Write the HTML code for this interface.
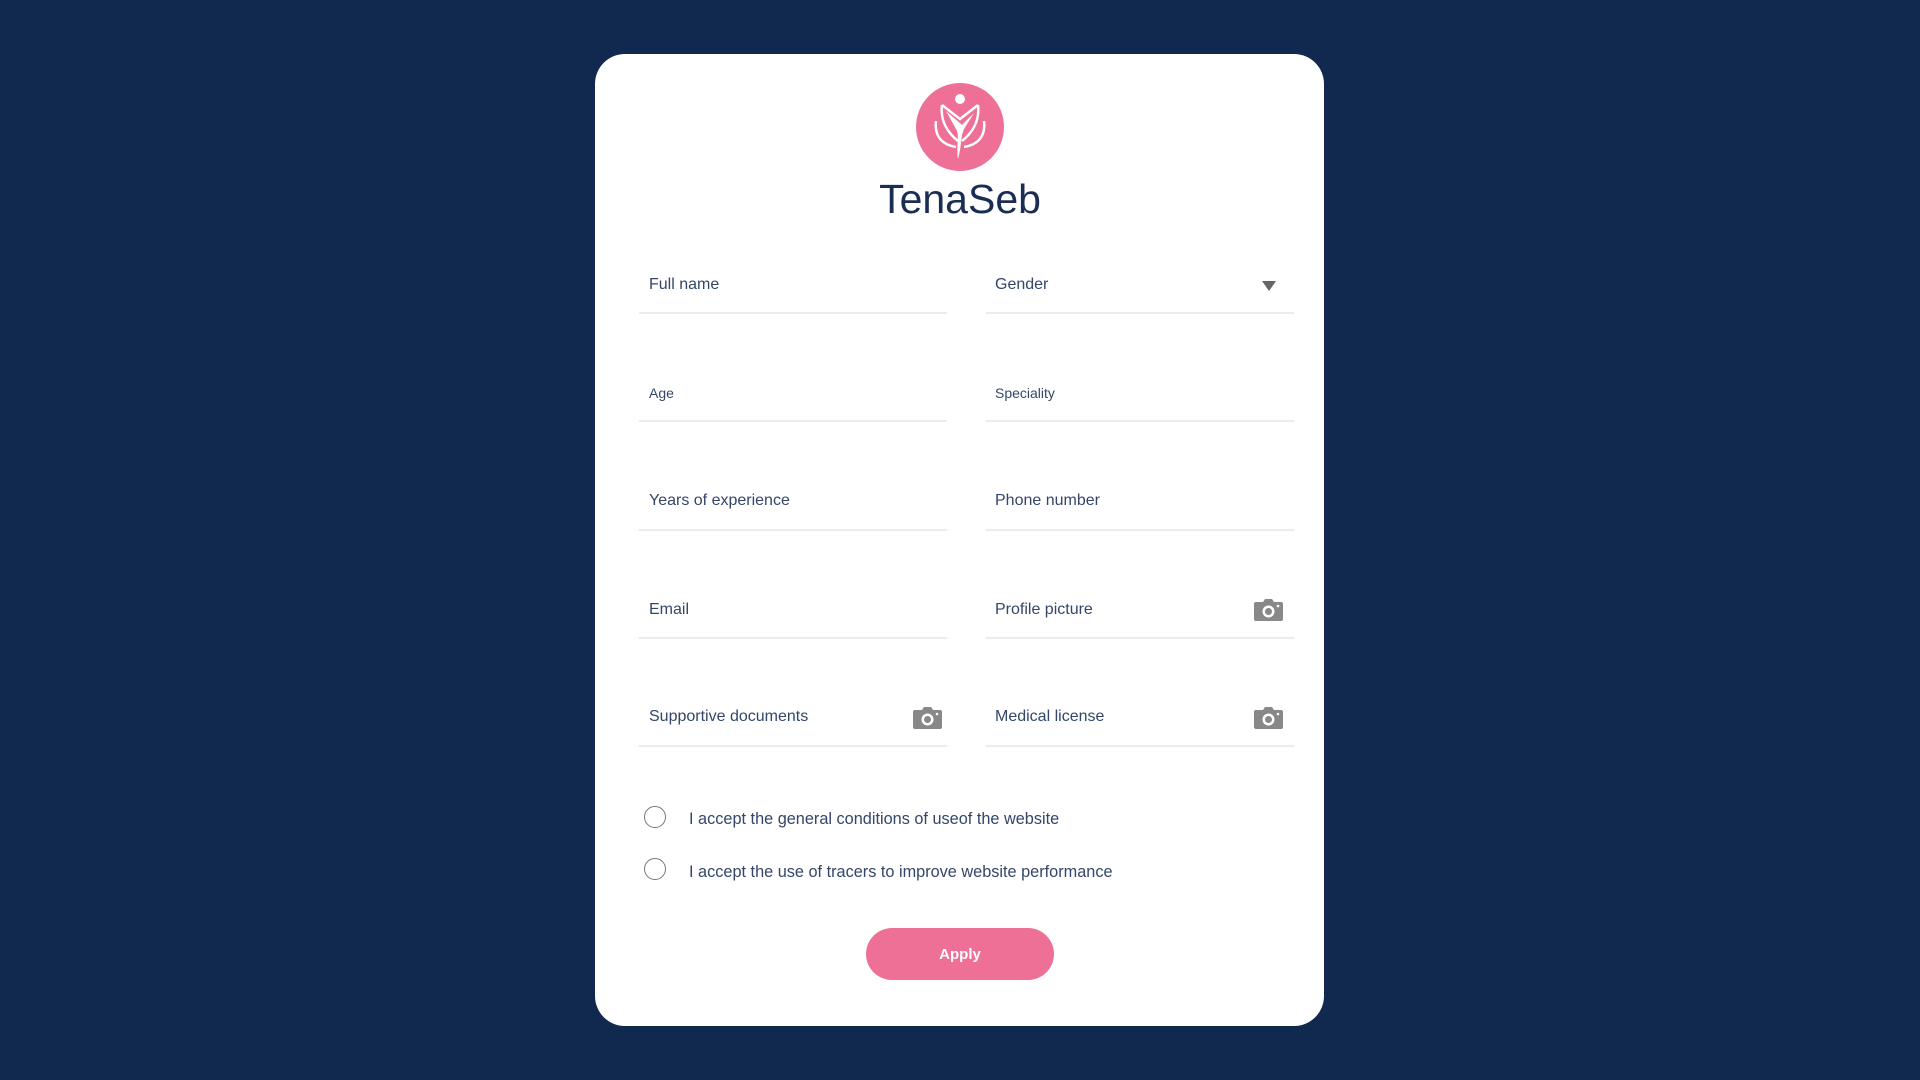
<!DOCTYPE html>
<html><head><meta charset="utf-8"><style>
*{margin:0;padding:0;box-sizing:border-box}
body{width:1920px;height:1080px;background:#11294f;font-family:"Liberation Sans",sans-serif;position:relative;overflow:hidden}
.card{position:absolute;left:595px;top:54px;width:729px;height:972px;background:#fff;border-radius:30px}
.abs{position:absolute}
.lbl{position:absolute;font-size:16px;color:#34466a;margin-top:2px}
.line{position:absolute;height:2px;background:#ececec;width:308px}
.cam{position:absolute;width:29px;height:22px}
.radio{position:absolute;width:22px;height:22px;border:1.5px solid #777;border-radius:50%;left:644px}
.rt{position:absolute;left:689px;font-size:16.3px;color:#34466a;margin-top:2px}
.btn{position:absolute;left:866px;top:928px;width:188px;height:52px;background:#ee7096;border-radius:26px;color:#fff;font-weight:bold;font-size:15px;text-align:center;line-height:54px}
</style></head><body>
<div class="card"></div>
<svg class="abs" style="left:916px;top:83px" width="88" height="88" viewBox="0 0 88 88">
<circle cx="44" cy="44" r="44" fill="#ee7096"/>
<g fill="none" stroke="#fff" stroke-width="2.5">
<path d="M20 38 C18 55 28 62 40 64"/><path d="M68 38 C70 55 60 62 48 64"/>
<path d="M26 22 C24 38 32 50 42 58"/><path d="M62 22 C64 38 56 50 46 58"/>
<path d="M26 22 L44 36 L62 22"/>
</g>
<circle cx="44" cy="16" r="5" fill="#fff"/>
<path d="M30 28 L46 42 L58 30 L48 46 C44 56 46 62 42 76 C40 62 44 52 40 46 Z" fill="#fff"/>
</svg>
<div class="abs" style="left:760px;top:176px;width:400px;text-align:center;font-size:41px;color:#1a2d52">TenaSeb</div>

<div class="lbl" style="left:649px;top:274px">Full name</div>
<div class="lbl" style="left:995px;top:274px">Gender</div>
<svg class="abs" style="left:1262px;top:281px" width="14" height="10"><path d="M0 0H14L7 10Z" fill="#666"/></svg>
<div class="line" style="left:639px;top:312px"></div><div class="line" style="left:986px;top:312px"></div>

<div class="lbl" style="left:649px;top:383px;font-size:14px">Age</div>
<div class="lbl" style="left:995px;top:383px;font-size:14px">Speciality</div>
<div class="line" style="left:639px;top:420px"></div><div class="line" style="left:986px;top:420px"></div>

<div class="lbl" style="left:649px;top:490px">Years of experience</div>
<div class="lbl" style="left:995px;top:490px">Phone number</div>
<div class="line" style="left:639px;top:529px"></div><div class="line" style="left:986px;top:529px"></div>

<div class="lbl" style="left:649px;top:599px">Email</div>
<div class="lbl" style="left:995px;top:599px">Profile picture</div>
<div class="line" style="left:639px;top:637px"></div><div class="line" style="left:986px;top:637px"></div>

<div class="lbl" style="left:649px;top:706px">Supportive documents</div>
<div class="lbl" style="left:995px;top:706px">Medical license</div>
<div class="line" style="left:639px;top:745px"></div><div class="line" style="left:986px;top:745px"></div>

<svg class="cam" style="left:1254px;top:599px" viewBox="0 0 29 22"><path d="M9 3 L11 0 H18 L20 3 H27 Q29 3 29 5 V20 Q29 22 27 22 H2 Q0 22 0 20 V5 Q0 3 2 3Z" fill="#888"/><circle cx="14.5" cy="12.5" r="6" fill="#fff"/><circle cx="14.5" cy="12.5" r="3.5" fill="#888"/><circle cx="24" cy="7" r="1.3" fill="#fff"/></svg>
<svg class="cam" style="left:913px;top:707px" viewBox="0 0 29 22"><path d="M9 3 L11 0 H18 L20 3 H27 Q29 3 29 5 V20 Q29 22 27 22 H2 Q0 22 0 20 V5 Q0 3 2 3Z" fill="#888"/><circle cx="14.5" cy="12.5" r="6" fill="#fff"/><circle cx="14.5" cy="12.5" r="3.5" fill="#888"/><circle cx="24" cy="7" r="1.3" fill="#fff"/></svg>
<svg class="cam" style="left:1254px;top:707px" viewBox="0 0 29 22"><path d="M9 3 L11 0 H18 L20 3 H27 Q29 3 29 5 V20 Q29 22 27 22 H2 Q0 22 0 20 V5 Q0 3 2 3Z" fill="#888"/><circle cx="14.5" cy="12.5" r="6" fill="#fff"/><circle cx="14.5" cy="12.5" r="3.5" fill="#888"/><circle cx="24" cy="7" r="1.3" fill="#fff"/></svg>

<div class="radio" style="top:806px"></div>
<div class="rt" style="top:808px">I accept the general conditions of useof the website</div>
<div class="radio" style="top:858px"></div>
<div class="rt" style="top:861px">I accept the use of tracers to improve website performance</div>

<div class="btn">Apply</div>
</body></html>
